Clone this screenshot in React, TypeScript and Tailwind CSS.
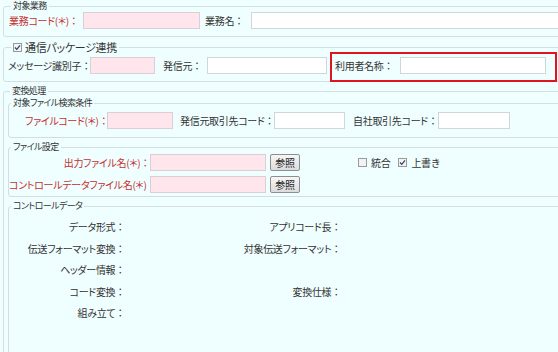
import React from "react";

const font = "font-['Noto_Sans_CJK_JP','Noto_Sans',sans-serif]";

function Box({ className, pink }: { className: string; pink?: boolean }) {
  return (
    <div
      className={`h-[17px] shrink-0 border ${
        pink ? "bg-[#ffe6ec] border-[#dccfd3]" : "bg-white border-[#cfd8d8]"
      } ${className}`}
    />
  );
}

function Check({ on }: { on?: boolean }) {
  return (
    <span className="inline-flex w-[9px] h-[9px] shrink-0 items-center justify-center border border-[#9a9a9a] bg-[#f3f3f3]">
      {on && (
        <svg width="7" height="7" viewBox="0 0 7 7">
          <path d="M1 3.5 L2.8 5.4 L6 1.4" fill="none" stroke="#2b3f6b" strokeWidth="1.2" />
        </svg>
      )}
    </span>
  );
}

function Label({ text, className = "" }: { text: string; className?: string }) {
  return (
    <span className={`shrink-0 whitespace-nowrap ${className}`}>
      <span className="[font-feature-settings:'palt']">{text}</span>
      {text && <span>：</span>}
    </span>
  );
}

const legend = "ml-[2px] px-[2px] text-[9px] leading-[12px] tracking-[-0.6px] text-[#333] [font-feature-settings:'palt']";
const fs = "border border-[#d3dfdf] rounded-[3px]";
const red = "text-[#c62f2f]";
const btn =
  "ml-[4px] w-[30px] h-[17px] rounded-[2px] border border-[#8e8e8e] bg-gradient-to-b from-[#f6f6f6] to-[#dcdcdc] text-[10px] leading-[15px] text-[#222]";

const ctrlRows = [
  ["データ形式", "アプリコード長"],
  ["伝送フォーマット変換", "対象伝送フォーマット"],
  ["ヘッダー情報", ""],
  ["コード変換", "変換仕様"],
  ["組み立て", ""],
];

export default function App() {
  return (
    <div className={`relative w-[558px] h-[352px] overflow-hidden bg-[#effefe] text-[10px] tracking-[-0.3px] text-[#333] ${font}`}>
      {/* 対象業務 */}
      <fieldset className={`ml-[3px] w-[620px] pl-[5px] pb-[8px] ${fs}`}>
        <legend className={legend}>対象業務</legend>
        <div className="flex items-center h-[16px]">
          <Label text="業務コード(＊)" className={`w-[74px] ${red}`} />
          <Box pink className="w-[117px]" />
          <Label text="業務名" className="ml-[5px] w-[46px]" />
          <Box className="w-[320px]" />
        </div>
      </fieldset>

      {/* 通信パッケージ連携 */}
      <fieldset className={`mt-[4px] ml-[3px] w-[620px] pl-[4px] pb-[4px] ${fs}`}>
        <legend className="ml-[3px] px-[2px] leading-[12px] text-[11px] flex items-center gap-[3px] [font-feature-settings:'palt']">
          <Check on />
          <span>通信パッケージ連携</span>
        </legend>
        <div className="flex items-center h-[24px]">
          <Label text="メッセージ識別子" className="w-[82px]" />
          <Box pink className="w-[65px]" />
          <Label text="発信元" className="ml-[8px] w-[44px]" />
          <Box className="w-[120px]" />
          <Label text="利用者名称" className="ml-[8px] w-[65px]" />
          <Box className="w-[146px]" />
        </div>
      </fieldset>

      {/* highlight */}
      <div className="absolute left-[330px] top-[52px] w-[227px] h-[30px] border-2 border-[#e0141e]" />

      {/* 変換処理 */}
      <fieldset className={`mt-[3px] ml-[3px] w-[620px] h-[320px] pl-[4px] ${fs}`}>
        <legend className={legend}>変換処理</legend>

        <fieldset className={`w-[600px] pb-[6px] ${fs}`}>
          <legend className={legend}>対象ファイル検索条件</legend>
          <div className="flex items-center h-[22px]">
            <Label text="ファイルコード(＊)" className={`ml-[16px] w-[82px] ${red}`} />
            <Box pink className="w-[66px]" />
            <Label text="発信元取引先コード" className="ml-[7px] w-[94px]" />
            <Box className="w-[71px]" />
            <Label text="自社取引先コード" className="ml-[8px] w-[85px]" />
            <Box className="w-[72px]" />
          </div>
        </fieldset>

        <fieldset className={`mt-[3px] w-[600px] pb-[3px] ${fs}`}>
          <legend className={legend}>ファイル設定</legend>
          <div className="flex flex-col gap-[4px]">
            <div className="flex items-center h-[18px]">
              <Label text="出力ファイル名(＊)" className={`w-[141px] text-right ${red}`} />
              <Box pink className="w-[116px]" />
              <button className={btn}>参照</button>
              <span className="ml-[58px] flex items-center gap-[4px]">
                <Check />
                <span>統合</span>
              </span>
              <span className="ml-[8px] flex items-center gap-[4px]">
                <Check on />
                <span>上書き</span>
              </span>
            </div>
            <div className="flex items-center h-[18px]">
              <Label text="コントロールデータファイル名(＊)" className={`w-[141px] text-right ${red}`} />
              <Box pink className="w-[116px]" />
              <button className={btn}>参照</button>
            </div>
          </div>
        </fieldset>

        <fieldset className={`mt-[3px] w-[600px] h-[200px] pt-[4px] ${fs}`}>
          <legend className={legend}>コントロールデータ</legend>
          {ctrlRows.map(([a, b], i) => (
            <div key={i} className="flex items-center h-[21.5px]">
              <Label text={a} className="w-[116px] text-right" />
              <Label text={b} className="w-[216px] text-right" />
            </div>
          ))}
        </fieldset>
      </fieldset>
    </div>
  );
}
